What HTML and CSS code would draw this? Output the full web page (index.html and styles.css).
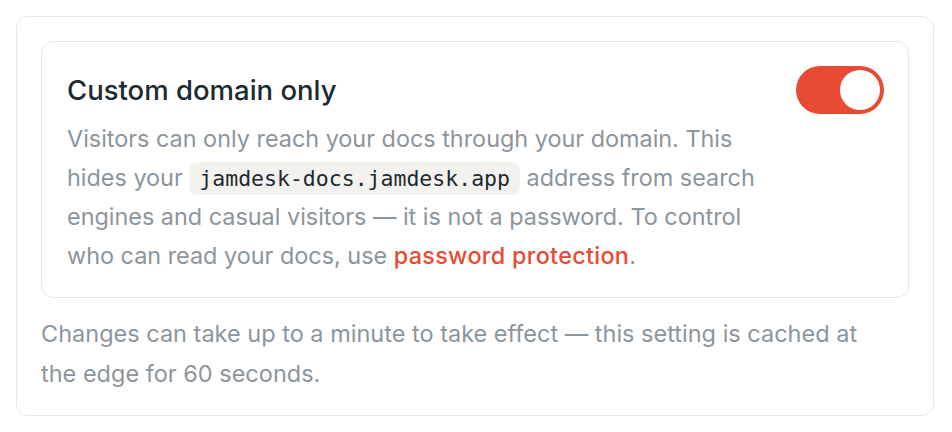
FILE: index.html
```html
<!DOCTYPE html>
<html lang="en">
<head>
<meta charset="utf-8">
<title>Custom domain only</title>
<link rel="stylesheet" href="styles.css">
</head>
<body>
<section class="panel">
  <div class="setting">
    <div class="setting-head">
      <h3 class="setting-title">Custom domain only</h3>
      <button class="toggle is-on" type="button" aria-pressed="true" aria-label="Custom domain only"><span class="knob"></span></button>
    </div>
    <p class="setting-desc">Visitors can only reach your docs through your domain. This hides your <code class="code">jamdesk-docs.jamdesk.app</code> address from search engines and casual visitors — it is not a password. To control who can read your docs, use <a class="link" href="#">password protection</a>.</p>
  </div>
  <p class="note">Changes can take up to a minute to take effect — this setting is cached at the edge for 60 seconds.</p>
</section>
</body>
</html>
```

FILE: styles.css
```css
* { box-sizing: border-box; }
html, body { background: #ffffff; }
body {
  margin: 16px 18px 16px 16px;
  font-family: Inter, "Noto Sans", "Liberation Sans", sans-serif;
  -webkit-font-smoothing: antialiased;
}
.panel {
  border: 1px solid #e6e7e8;
  border-radius: 12px;
  padding: 24px 24px 21px 24px;
  background: #fff;
}
.setting {
  border: 1px solid #e6e7e8;
  border-radius: 12px;
  padding: 24px 24px 22px 25px;
}
.setting-head {
  display: flex;
  align-items: center;
  justify-content: space-between;
  height: 48px;
}
.setting-title {
  margin: 0;
  font-size: 27.5px;
  font-weight: 500;
  color: #1d2a31;
}
.toggle {
  width: 88px;
  height: 48px;
  border: none;
  border-radius: 24px;
  background: #e84b34;
  padding: 4px;
  display: flex;
  justify-content: flex-end;
  align-items: center;
  cursor: pointer;
}
.knob {
  width: 40px;
  height: 40px;
  border-radius: 50%;
  background: #fff;
}
.setting-desc {
  margin: 6px 0 0 0;
  font-size: 23.4px;
  line-height: 38.5px;
  color: #8c959c;
  max-width: 705px;
}
.code {
  font-family: "DejaVu Sans Mono", "Liberation Mono", monospace;
  font-size: 21.5px;
  color: #1d2a31;
  background: #f3f2ef;
  border-radius: 8px;
  padding: 4px 10px;
}
.link {
  color: #e84b34;
  text-decoration: none;
  font-weight: 500;
  letter-spacing: 0.3px;
}
.note {
  margin: 16px 0 0 0;
  font-size: 23.5px;
  line-height: 40px;
  color: #8c959c;
  max-width: 850px;
}
```
